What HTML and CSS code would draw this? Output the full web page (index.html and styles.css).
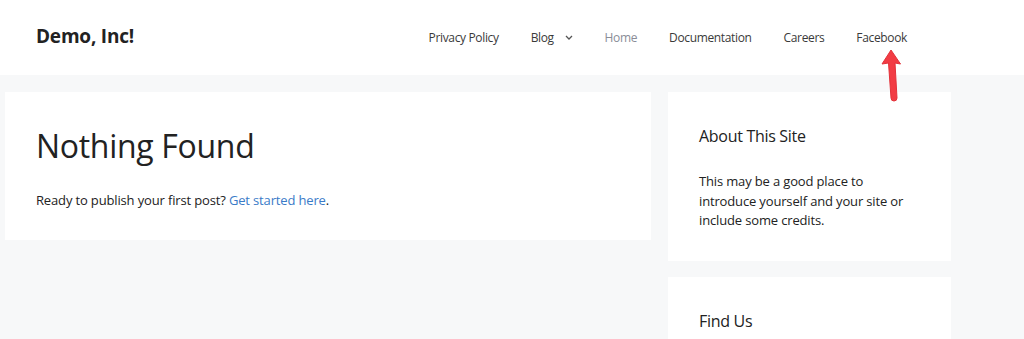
FILE: index.html
```html
<!DOCTYPE html>
<html lang="en">
<head>
    <meta charset="UTF-8">
    <meta name="viewport" content="width=device-width, initial-scale=1.0">
    <title>Demo, Inc!</title>
    <link rel="stylesheet" href="styles.css">
</head>
<body>
    <header class="site-header">
        <div class="site-title">Demo, Inc!</div>
        <nav class="main-nav">
            <ul class="menu">
                <li><a href="#">Privacy Policy</a></li>
                <li><a href="#">Blog <span class="chevron"><svg width="8" height="5" viewBox="0 0 8 5"><path d="M1 1l3 3 3-3" fill="none" stroke="#555" stroke-width="1.3"/></svg></span></a></li>
                <li class="current"><a href="#">Home</a></li>
                <li><a href="#">Documentation</a></li>
                <li><a href="#">Careers</a></li>
                <li><a href="#">Facebook</a></li>
            </ul>
        </nav>
        <!-- annotation arrow pointing at Facebook -->
        <svg class="arrow" width="24" height="54" viewBox="0 0 24 54">
            <path d="M12 1 L21.5 15 L16 14 L18 49 Q18 52 15 52 Q12 52 12 49 L9.5 14 L3 15 Z" fill="#f23c44" stroke="#e3323a" stroke-width="1" stroke-linejoin="round"/>
        </svg>
    </header>

    <div class="site-content">
        <main class="content-area">
            <article class="no-results">
                <h1 class="page-title">Nothing Found</h1>
                <p>Ready to publish your first post? <a href="#">Get started here</a>.</p>
            </article>
        </main>

        <aside class="sidebar">
            <section class="widget">
                <h2 class="widget-title">About This Site</h2>
                <p>This may be a good place to introduce yourself and your site or include some credits.</p>
            </section>
            <section class="widget">
                <h2 class="widget-title">Find Us</h2>
            </section>
        </aside>
    </div>
</body>
</html>
```

FILE: styles.css
```css
:root {
    --bg: #f7f8f9;
    --text: #222222;
    --nav: #3a3a3a;
    --link: #3a7bc8;
}

body {
    margin: 0;
    padding: 0;
    background: var(--bg);
    color: var(--text);
    font-family: 'Open Sans', 'Noto Sans', sans-serif;
    overflow: hidden;
}

a {
    text-decoration: none;
}

.site-header {
    position: relative;
    display: flex;
    align-items: center;
    height: 75px;
    background: white;
    padding: 0 0 0 36px;
}

.site-title {
    font-size: 19px;
    font-weight: 700;
    color: var(--text);
    letter-spacing: -0.2px;
    margin-top: -3px;
}

.main-nav {
    margin-left: auto;
    margin-right: 101px;
    margin-top: -4px;
}

.menu {
    display: flex;
    list-style: none;
    margin: 0;
    padding: 0;
}

.menu li {
    padding: 0 16px;
}

.menu a {
    color: var(--nav);
    font-size: 12px;
    letter-spacing: -0.35px;
}

.menu .current a {
    color: #8a8d97;
}

.chevron {
    display: inline-block;
    margin-left: 8px;
    vertical-align: 2px;
}

.arrow {
    position: absolute;
    left: 879px;
    top: 49px;
    z-index: 2;
}

.site-content {
    display: flex;
    align-items: flex-start;
    gap: 17px;
    padding: 17px 0 0 5px;
}

.content-area {
    width: 646px;
}

.no-results {
    background: white;
    padding: 31px 31px 30px;
    height: 87px;
}

.page-title {
    margin: 0 0 21px;
    font-size: 32px;
    font-weight: 400;
    line-height: 46px;
    letter-spacing: -0.3px;
}

.no-results p {
    margin: 0;
    font-size: 13px;
    line-height: 20px;
    letter-spacing: -0.15px;
}

.no-results a {
    color: var(--link);
}

.sidebar {
    width: 283px;
    display: flex;
    flex-direction: column;
    gap: 16px;
}

.widget {
    background: white;
    padding: 31px 31px 30px;
}

.widget-title {
    margin: 0 0 23px;
    font-size: 16px;
    font-weight: 400;
    line-height: 26px;
    letter-spacing: -0.3px;
}

.widget p {
    margin: 0;
    font-size: 13px;
    line-height: 19.5px;
    letter-spacing: -0.15px;
}
```
